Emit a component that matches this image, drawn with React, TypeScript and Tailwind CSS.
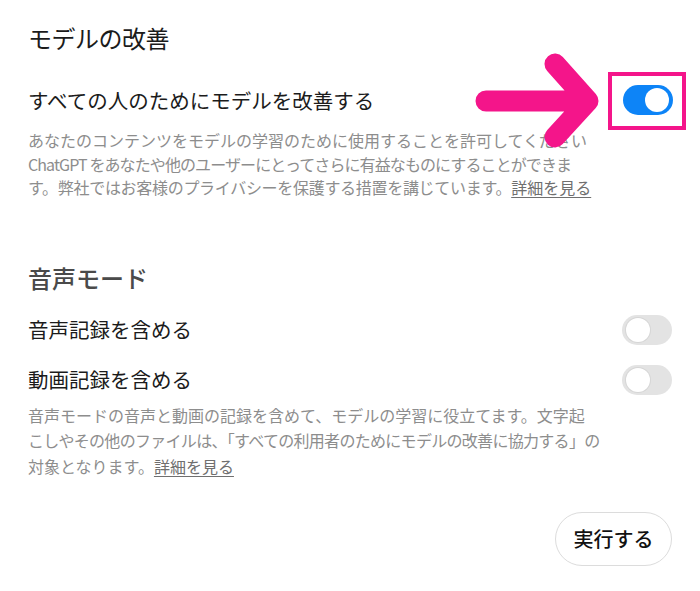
import React from "react";

const font = { fontFamily: '"Noto Sans CJK JP", "Noto Sans", sans-serif' };

function Toggle({ on = false }: { on?: boolean }) {
  return (
    <div
      className={`relative h-[30px] w-[50px] shrink-0 rounded-full ${
        on ? "bg-[#0d84f7]" : "bg-[#e3e3e3]"
      }`}
    >
      <div
        className={`absolute top-[3px] h-[24px] w-[24px] rounded-full bg-white ${
          on ? "right-[4px]" : "left-[4px] shadow-[0_0_0_1px_#d6d6d6]"
        }`}
      />
    </div>
  );
}

function DetailLink() {
  return <span className="text-[#6f6f6f] underline underline-offset-[3px]">詳細を見る</span>;
}

export default function App() {
  return (
    <div className="relative h-[591px] w-[700px] overflow-hidden bg-white px-[28px] text-[#1b1b1b]" style={font}>
      <h2 className="mt-[20px] text-[24px] leading-[36px] font-normal tracking-[-0.5px]">モデルの改善</h2>

      <div className="mt-[29px] flex h-[30px] items-center justify-between">
        <span className="text-[20.5px]">すべての人のためにモデルを改善する</span>
        <div className="relative mr-[-1px]">
          <Toggle on />
          <div className="absolute left-[-15px] top-[-13px] h-[58px] w-[78px] border-[4px] border-[#f4158a]" />
        </div>
      </div>

      <p className="mt-[14px] text-[16px] leading-[23.5px] text-[#8d8d8d] whitespace-nowrap">
        あなたのコンテンツをモデルの学習のために使用することを許可してください
        <br />
        <span className="tracking-[-0.9px]">ChatGPT をあなたや他のユーザーにとってさらに有益なものにすることができま</span>
        <br />
        <span className="tracking-[-0.3px]">す。弊社ではお客様のプライバシーを保護する措置を講じています。</span>
        <DetailLink />
      </p>

      <h2 className="mt-[60px] text-[24px] leading-[36px] font-medium text-[#4a4a4a]">音声モード</h2>

      <div className="mt-[19px] flex h-[30px] items-center justify-between">
        <span className="text-[20.5px]">音声記録を含める</span>
        <Toggle />
      </div>
      <div className="mt-[20px] flex h-[30px] items-center justify-between">
        <span className="text-[20.5px]">動画記録を含める</span>
        <Toggle />
      </div>

      <p className="mt-[8px] text-[16px] leading-[25.5px] text-[#8d8d8d] whitespace-nowrap">
        音声モードの音声と動画の記録を含めて、モデルの学習に役立てます。文字起
        <br />
        <span className="tracking-[-0.7px]">こしやその他のファイルは、「すべての利用者のためにモデルの改善に協力する」の</span>
        <br />
        対象となります。<DetailLink />
      </p>

      <div className="mt-[33px] flex justify-end">
        <button className="h-[54px] w-[117px] rounded-full border border-[#dcdcdc] bg-white text-[20px] font-medium text-[#111]">
          実行する
        </button>
      </div>

      <svg
        className="absolute left-[460px] top-[45px]"
        width="150"
        height="115"
        viewBox="0 0 150 115"
        fill="none"
      >
        <path
          d="M26 56 H126 M95 19 L128 56 L95 92"
          stroke="#f4158a"
          strokeWidth="21"
          strokeLinecap="round"
          strokeLinejoin="round"
        />
      </svg>
    </div>
  );
}
